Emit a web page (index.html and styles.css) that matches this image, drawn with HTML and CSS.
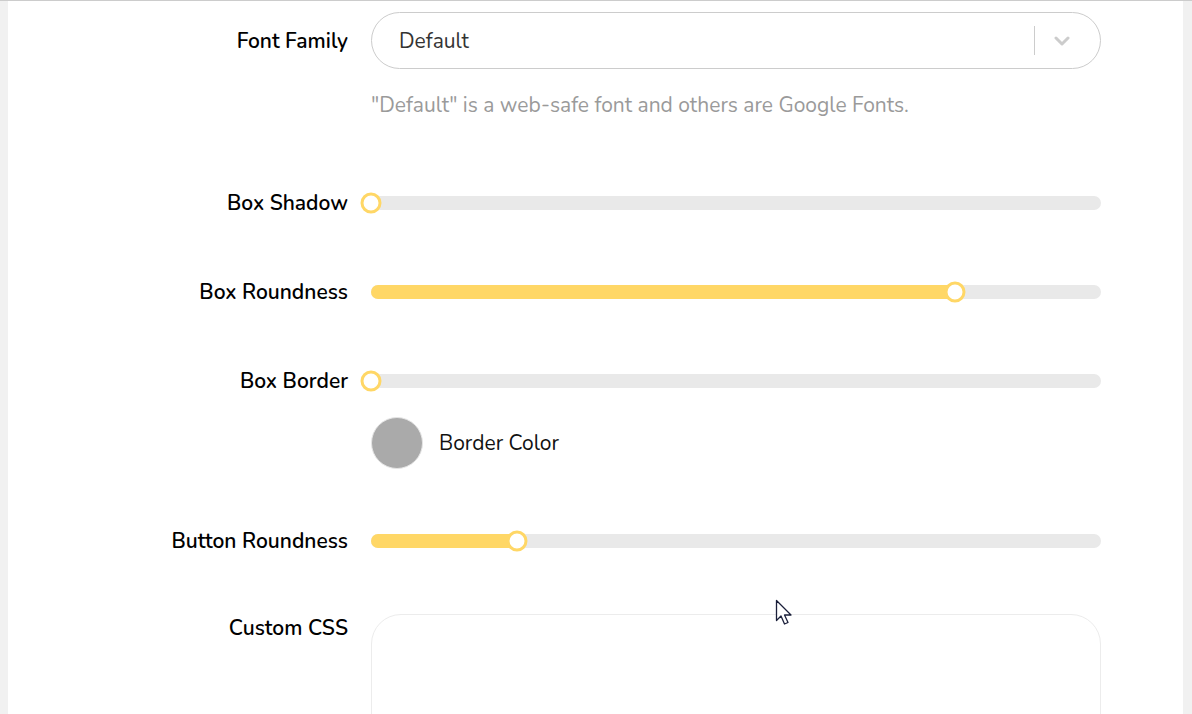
FILE: index.html
```html
<!DOCTYPE html>
<html lang="en">
<head>
    <meta charset="UTF-8">
    <meta name="viewport" content="width=device-width, initial-scale=1.0">
    <title>Appearance Settings</title>
    <link rel="stylesheet" href="styles.css">
</head>
<body>
    <div class="panel">
        <div class="row row-font">
            <label class="label">Font Family</label>
            <div class="control">
                <div class="select">
                    <span class="select-value">Default</span>
                    <span class="select-sep"></span>
                    <svg class="select-arrow" width="16" height="10" viewBox="0 0 16 10">
                        <path d="M2 2 L8 8 L14 2" fill="none" stroke="#cccccc" stroke-width="3" stroke-linecap="round" stroke-linejoin="round"/>
                    </svg>
                </div>
            </div>
        </div>
        <div class="row">
            <div class="label"></div>
            <p class="help">"Default" is a web-safe font and others are Google Fonts.</p>
        </div>

        <div class="row row-slider first-slider">
            <label class="label">Box Shadow</label>
            <div class="control">
                <div class="slider">
                    <div class="slider-fill" style="width: 0%"></div>
                    <div class="slider-thumb" style="left: 0%"></div>
                </div>
            </div>
        </div>

        <div class="row row-slider">
            <label class="label">Box Roundness</label>
            <div class="control">
                <div class="slider">
                    <div class="slider-fill" style="width: 80%"></div>
                    <div class="slider-thumb" style="left: 80%"></div>
                </div>
            </div>
        </div>

        <div class="row row-slider">
            <label class="label">Box Border</label>
            <div class="control">
                <div class="slider">
                    <div class="slider-fill" style="width: 0%"></div>
                    <div class="slider-thumb" style="left: 0%"></div>
                </div>
            </div>
        </div>
        <div class="row row-color">
            <div class="label"></div>
            <div class="control color-pick">
                <span class="swatch"></span>
                <span class="color-name">Border Color</span>
            </div>
        </div>

        <div class="row row-slider row-button">
            <label class="label">Button Roundness</label>
            <div class="control">
                <div class="slider">
                    <div class="slider-fill" style="width: 20%"></div>
                    <div class="slider-thumb" style="left: 20%"></div>
                </div>
            </div>
        </div>

        <div class="row row-css">
            <label class="label">Custom CSS</label>
            <div class="control">
                <textarea class="css-box"></textarea>
            </div>
        </div>
    </div>

    <svg class="cursor" width="20" height="28" viewBox="0 0 20 28">
        <path d="M1.5 1.5 L1.5 21.5 L6 17 L9.5 25 L13 23.5 L9.5 16 L16 16 Z" fill="#ffffff" stroke="#1a1f3a" stroke-width="1.3" stroke-linejoin="round"/>
    </svg>
</body>
</html>
```

FILE: styles.css
```css
body {
    margin: 0;
    background: #f1f1f1;
    font-family: "Nunito", "Open Sans", sans-serif;
    color: #111;
    height: 714px;
    overflow: hidden;
    border-top: 1px solid #cccccc;
    position: relative;
}
.panel {
    background: #fff;
    margin: 0 9px 0 8px;
    height: 713px;
    padding-top: 11px;
    box-sizing: border-box;
}
.row {
    display: flex;
    align-items: center;
    gap: 23px;
}
.label {
    width: 340px;
    flex: none;
    text-align: right;
    font-size: 21px;
    font-weight: 600;
    line-height: 28px;
    color: #000;
}
.control {
    width: 730px;
    flex: none;
}
.select {
    height: 57px;
    box-sizing: border-box;
    border: 1px solid #cccccc;
    border-radius: 29px;
    display: flex;
    align-items: center;
    padding-left: 27px;
    padding-right: 30px;
}
.select-value {
    flex: 1;
    font-size: 21px;
    color: #333;
}
.select-sep {
    width: 1px;
    height: 29px;
    background: #cccccc;
    margin-right: 19px;
}
.help {
    margin: 22px 0 0;
    font-size: 21px;
    line-height: 28px;
    color: #9a9a9a;
}
.row-slider {
    margin-top: 61px;
}
.first-slider {
    margin-top: 70px;
}
.slider {
    position: relative;
    height: 14px;
    border-radius: 7px;
    background: #e9e9e9;
    margin: 4px 0;
}
.slider-fill {
    height: 100%;
    border-radius: 7px;
    background: #ffd766;
}
.slider-thumb {
    position: absolute;
    top: 50%;
    width: 21px;
    height: 21px;
    box-sizing: border-box;
    border: 3px solid #ffd766;
    border-radius: 50%;
    background: #fff;
    transform: translate(-50%, -50%);
}
.row-color {
    margin-top: 22px;
}
.color-pick {
    display: flex;
    align-items: center;
    gap: 16px;
}
.swatch {
    width: 52px;
    height: 52px;
    border-radius: 50%;
    background: #aaaaaa;
    border: 1px solid #e5e5e5;
    box-sizing: border-box;
}
.color-name {
    font-size: 21px;
    color: #111;
}
.row-button {
    margin-top: 58px;
}
.row-css {
    margin-top: 59px;
    align-items: flex-start;
}
.css-box {
    display: block;
    width: 100%;
    height: 140px;
    box-sizing: border-box;
    border: 1px solid #ececec;
    border-radius: 30px;
    resize: none;
    outline: none;
}
.cursor {
    position: absolute;
    left: 775px;
    top: 598px;
}
```
